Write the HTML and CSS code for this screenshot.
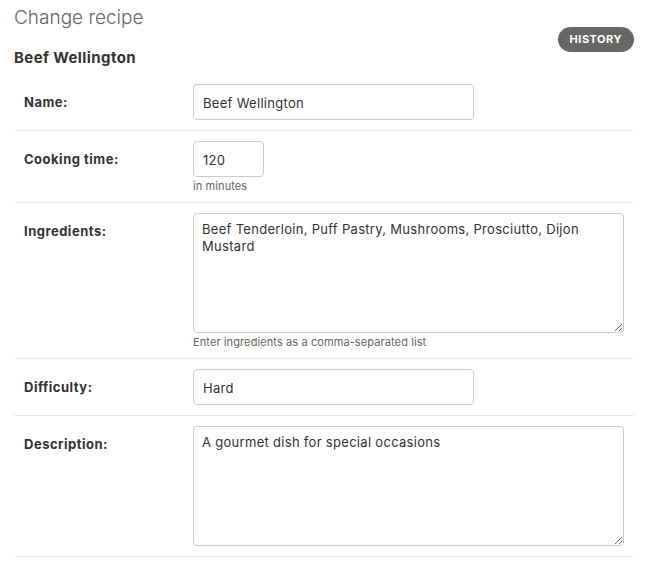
FILE: index.html
```html
<!DOCTYPE html>
<html lang="en">
<head>
<meta charset="utf-8">
<title>Change recipe</title>
<link rel="stylesheet" href="styles.css">
</head>
<body>
<div class="content">
  <h1 class="page-title">Change recipe</h1>
  <div class="header-row">
    <h2 class="object-name">Beef Wellington</h2>
    <ul class="object-tools">
      <li><a href="#" class="history-link">History</a></li>
    </ul>
  </div>
  <form class="change-form">
    <div class="form-row">
      <label class="field-label" for="id_name">Name:</label>
      <div class="field-box">
        <input class="text-input wide" id="id_name" type="text" value="Beef Wellington">
      </div>
    </div>
    <div class="form-row">
      <label class="field-label" for="id_time">Cooking time:</label>
      <div class="field-box">
        <input class="text-input narrow" id="id_time" type="text" value="120">
        <div class="help">in minutes</div>
      </div>
    </div>
    <div class="form-row">
      <label class="field-label" for="id_ingredients">Ingredients:</label>
      <div class="field-box">
        <textarea class="text-area" id="id_ingredients">Beef Tenderloin, Puff Pastry, Mushrooms, Prosciutto, Dijon Mustard</textarea>
        <div class="help">Enter ingredients as a comma-separated list</div>
      </div>
    </div>
    <div class="form-row">
      <label class="field-label" for="id_difficulty">Difficulty:</label>
      <div class="field-box">
        <input class="text-input wide" id="id_difficulty" type="text" value="Hard">
      </div>
    </div>
    <div class="form-row">
      <label class="field-label" for="id_description">Description:</label>
      <div class="field-box">
        <textarea class="text-area" id="id_description">A gourmet dish for special occasions</textarea>
      </div>
    </div>
  </form>
</div>
</body>
</html>
```

FILE: styles.css
```css
* { box-sizing: border-box; }
html, body {
  margin: 0;
  padding: 0;
  background: #fff;
}
body {
  font-family: Inter, Roboto, "Liberation Sans", Arial, sans-serif;
  color: #333;
  font-size: 13px;
}
.content {
  width: 634px;
  padding: 6px 0 0 14px;
}
.page-title {
  margin: 0;
  font-size: 19px;
  line-height: 24px;
  font-weight: 300;
  color: #666;
}
.header-row {
  display: flex;
  justify-content: space-between;
  align-items: flex-start;
  margin-top: -3px;
}
.object-name {
  margin: 21px 0 0 0;
  font-size: 15px;
  line-height: 20px;
  font-weight: 700;
  letter-spacing: 0.4px;
  color: #333;
}
.object-tools {
  list-style: none;
  margin: 0;
  padding: 0;
}
.history-link {
  display: block;
  height: 25px;
  line-height: 25px;
  padding: 0 12px;
  border-radius: 15px;
  background: #666;
  color: #fff;
  font-size: 11px;
  font-weight: 700;
  letter-spacing: 0.5px;
  text-transform: uppercase;
  text-decoration: none;
}
.change-form {
  margin-top: 6px;
}
.form-row {
  display: flex;
  align-items: flex-start;
  padding: 10px 10px;
  border-bottom: 1px solid #e8e8e8;
}
.field-label {
  width: 169px;
  flex: none;
  font-weight: 700;
  color: #333;
  letter-spacing: 0.5px;
  line-height: 17px;
  padding-top: 10px;
}
.field-box {
  display: flex;
  flex-direction: column;
  align-items: flex-start;
}
.text-input {
  height: 36px;
  border: 1px solid #ccc;
  border-radius: 4px;
  padding: 1px 9px 0;
  font: inherit;
  font-size: 13px;
  letter-spacing: 0.3px;
  color: #333;
  background: #fff;
  margin: 0;
}
.text-input.wide { width: 281px; }
.text-input.narrow { width: 71px; }
.text-area {
  width: 431px;
  height: 120px;
  border: 1px solid #ccc;
  border-radius: 4px;
  padding: 7px 8px 6px;
  font: inherit;
  font-size: 13px;
  letter-spacing: 0.3px;
  line-height: 17px;
  color: #333;
  background: #fff;
  margin: 0;
  resize: both;
  display: block;
}
.help {
  margin-top: 3px;
  font-size: 11px;
  line-height: 12px;
  letter-spacing: 0.1px;
  color: #666;
}
```
